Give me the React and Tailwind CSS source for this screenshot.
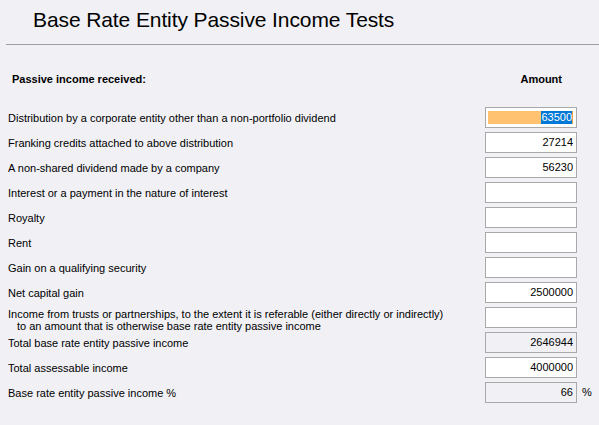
import React from "react";

const rows = [
  { label: "Distribution by a corporate entity other than a non-portfolio dividend", value: "63500", selected: true },
  { label: "Franking credits attached to above distribution", value: "27214" },
  { label: "A non-shared dividend made by a company", value: "56230" },
  { label: "Interest or a payment in the nature of interest", value: "" },
  { label: "Royalty", value: "" },
  { label: "Rent", value: "" },
  { label: "Gain on a qualifying security", value: "" },
  { label: "Net capital gain", value: "2500000" },
  {
    label: "Income from trusts or partnerships, to the extent it is referable (either directly or indirectly)",
    label2: "to an amount that is otherwise base rate entity passive income",
    value: "",
  },
  { label: "Total base rate entity passive income", value: "2646944", readOnly: true },
  { label: "Total assessable income", value: "4000000" },
  { label: "Base rate entity passive income %", value: "66", readOnly: true, suffix: "%" },
];

function Field({ value, selected, readOnly }) {
  const base = "w-[92px] h-[21px] border border-[#a9a9a9] flex items-center justify-end pr-[3px]";
  if (selected) {
    return (
      <div className={`${base} bg-white pl-[2px]`}>
        <div className="flex-1 h-[13px] bg-[#fec271]" />
        <span className="h-[13px] leading-[13px] bg-[#0078d7] text-white">{value}</span>
        <div className="w-px h-[13px] bg-[#f0a040]" />
      </div>
    );
  }
  return <div className={`${base} ${readOnly ? "bg-transparent" : "bg-white"}`}>{value}</div>;
}

export default function App() {
  return (
    <div
      className="w-[599px] h-[425px] overflow-hidden bg-[#f0f0f5] text-black"
      style={{ fontFamily: '"Liberation Sans", Arial, sans-serif' }}
    >
      <h1 className="pt-[9px] pl-[33px] text-[21px] leading-[22px] tracking-[-0.1px] font-normal">
        Base Rate Entity Passive Income Tests
      </h1>
      <div className="mt-[13px] ml-[6px] h-px bg-[#a0a0a0]" />

      <div className="mt-[26px] h-[16px] flex items-center justify-between pl-[12px] pr-[37px] text-[11px] font-bold">
        <span>Passive income received:</span>
        <span>Amount</span>
      </div>

      <div className="mt-[20px] flex flex-col gap-[4px] text-[11px]">
        {rows.map((r, i) => (
          <div key={i} className="flex items-center h-[21px]">
            <div className="flex-1 pl-[8px] leading-[12px]">
              {r.label2 ? (
                <div className="pt-[5px]">
                  <div>{r.label}</div>
                  <div className="pl-[9px]">{r.label2}</div>
                </div>
              ) : (
                r.label
              )}
            </div>
            <Field value={r.value} selected={r.selected} readOnly={r.readOnly} />
            <div className="w-[22px] pl-[5px]">{r.suffix}</div>
          </div>
        ))}
      </div>
    </div>
  );
}
